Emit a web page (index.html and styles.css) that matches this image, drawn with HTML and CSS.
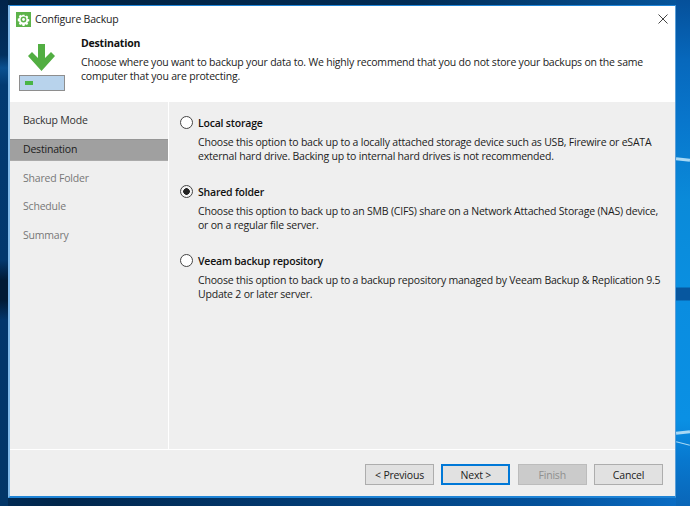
FILE: index.html
```html
<!DOCTYPE html>
<html lang="en">
<head>
<meta charset="utf-8">
<title>Configure Backup</title>
<link rel="stylesheet" href="styles.css">
</head>
<body>
<div class="wall-top"></div>
<div class="wall-left"></div>
<div class="wall-right"></div>
<div class="wall-streak s1"></div>
<div class="wall-streak s2"></div>
<div class="wall-streak s3"></div>
<main class="window">
  <header class="head">
    <div class="titlebar">
      <svg class="appicon" width="15" height="15" viewBox="0 0 15 15" aria-hidden="true">
        <rect width="15" height="15" fill="#5cb34a"/>
        <path d="M6.300 1.600h2.400l.3 1.600 1.100.5 1.400-.9 1.700 1.700-.9 1.400.5 1.100 1.600.3v2.400l-1.600.3-.5 1.100.9 1.400-1.700 1.700-1.400-.9-1.100.5-.3 1.600H6.300l-.3-1.600-1.100-.5-1.400.9-1.700-1.700.9-1.400-.5-1.100-1.600-.3V6.300l1.600-.3.5-1.100-.9-1.400 1.700-1.700 1.400.9 1.100-.5z" fill="#fff" transform="translate(1.300 1.300) scale(.83)"/>
        <circle cx="7.500" cy="7.500" r="2.900" fill="#5cb34a"/>
        <circle cx="7.500" cy="7.500" r="1.400" fill="#fff"/>
      </svg>
      <span class="wintitle">Configure Backup</span>
      <svg class="close" width="10" height="10" viewBox="0 0 10 10" aria-hidden="true"><path d="M.5.500l9 9M9.500.500l-9 9" stroke="#444" stroke-width="1" fill="none"/></svg>
    </div>
    <div class="banner">
      <svg class="bannericon" width="48" height="48" viewBox="0 0 48 48" aria-hidden="true">
        <path d="M20 0h7v14l6-6 4 4-13.500 15L10 12l4-4 6 6z" fill="#52ae42"/>
        <rect x="1.500" y="31.500" width="45" height="15" fill="#b8d3ec" stroke="#8e8e8e"/>
        <rect x="7" y="37" width="8" height="4" fill="#49b545"/>
      </svg>
      <div class="bannertext">
        <h1>Destination</h1>
        <p>Choose where you want to backup your data to. We highly recommend that you do not store your backups on the same computer that you are protecting.</p>
      </div>
    </div>
  </header>
  <div class="middle">
    <nav class="steps">
      <div class="step">Backup Mode</div>
      <div class="step current">Destination</div>
      <div class="step off">Shared Folder</div>
      <div class="step off">Schedule</div>
      <div class="step off">Summary</div>
    </nav>
    <section class="options">
      <div class="option">
        <div class="optlabel"><span class="radio"></span>Local storage</div>
        <p>Choose this option to back up to a locally attached storage device such as USB, Firewire or eSATA external hard drive. Backing up to internal hard drives is not recommended.</p>
      </div>
      <div class="option">
        <div class="optlabel"><span class="radio on"></span>Shared folder</div>
        <p>Choose this option to back up to an SMB (CIFS) share on a Network Attached Storage (NAS) device, or on a regular file server.</p>
      </div>
      <div class="option">
        <div class="optlabel"><span class="radio"></span>Veeam backup repository</div>
        <p>Choose this option to back up to a backup repository managed by Veeam Backup &amp; Replication 9.5 Update 2 or later server.</p>
      </div>
    </section>
  </div>
  <footer class="foot">
    <button class="btn" type="button">&lt; Previous</button>
    <button class="btn primary" type="button">Next &gt;</button>
    <button class="btn disabled" type="button">Finish</button>
    <button class="btn" type="button">Cancel</button>
  </footer>
</main>
</body>
</html>
```

FILE: styles.css
```css
* { box-sizing: border-box; }
html, body { height: 100%; }
body {
  margin: 0;
  position: relative;
  overflow: hidden;
  padding: 5px 14px 8px 8px;
  font-family: "Open Sans", "Noto Sans", "Liberation Sans", sans-serif;
  font-size: 10.5px;
  letter-spacing: -0.2px;
  color: #1c1c1c;
  background: linear-gradient(90deg, #012b55 0, #01264b 60px, #023a72 300px, #04529c 550px, #0a6fc8 690px);
}
.wall-top {
  position: absolute; left: 0; top: 0; right: 0; height: 5px;
  background: linear-gradient(90deg, #01213f, #012c55 60%, #05569e);
}
.wall-left {
  position: absolute; left: 0; top: 0; width: 8px; bottom: 0;
  background: linear-gradient(180deg, #01244a 0, #01305f 55px, #0a5090 68px, #023a72 85px, #02386e 260px, #011b36 280px, #011b36 300px, #02366c 320px, #023668 506px);
}
.wall-right {
  position: absolute; right: 0; top: 0; width: 14px; bottom: 0;
  background: linear-gradient(180deg, #05509a 0, #0768bc 60px, #0876cc 120px, #0a8ad9 200px, #0a8fe0 287px, #07579f 288px, #07579f 300px, #0a8de0 301px, #0a90e4 420px, #0878cf 460px, #0a66b8 506px);
}
.wall-streak {
  position: absolute; right: 0; width: 14px; height: 3px;
  background: #a8d8f4;
}
.s1 { top: 158px; transform: rotate(6deg); }
.s2 { top: 431px; transform: rotate(-6deg); }
.s3 { top: 443px; height: 1px; transform: rotate(14deg); }

.window {
  position: relative;
  width: 668px;
  height: 493px;
  display: flex;
  flex-direction: column;
  background: #efefef;
  border: 1px solid #1f84d6;
  border-left-width: 2px;
  border-bottom-width: 2px;
  border-right-color: #5a9fd8;
  border-left-color: #7fb8e8;
}
.head { height: 96px; background: #fff; flex: none; }
.titlebar {
  height: 24px;
  display: flex;
  align-items: center;
  padding: 2px 7px 0 6px;
}
.appicon { margin-right: 4px; }
.wintitle { flex: 1; color: #222; }
.banner { display: flex; padding: 0 10px 0 8px; }
.bannericon { flex: none; margin: 14px 15px 0 0; }
.bannertext { padding-top: 6px; }
.bannertext h1 { margin: 0 0 4px; font-size: 10.5px; font-weight: 700; line-height: 15px; color: #111; }
.bannertext p { margin: 0; line-height: 14px; }

.middle { flex: 1; display: flex; min-height: 0; border-bottom: 1px solid #fff; }
.steps {
  width: 159px;
  flex: none;
  padding-top: 8px;
  border-right: 1.500px solid #fff;
}
.step {
  height: 22px;
  margin-bottom: 6.750px;
  padding-left: 13px;
  line-height: 21px;
  color: #333;
}
.step.current { background: #a0a0a0; color: #1c1c1c; border-top: 1px solid #969696; border-bottom: 1px solid #aaa; line-height: 19px; }
.step.off { color: #777; }
.options { flex: 1; padding: 13px 10px 0 11px; }
.option { margin-bottom: 21px; }
.option p { margin: 0; padding-left: 18px; line-height: 14px; }
.optlabel {
  display: flex;
  align-items: center;
  height: 15px;
  margin-bottom: 5px;
  font-weight: 600;
  color: #111;
}
.radio {
  width: 13px;
  height: 13px;
  margin-right: 5px;
  border: 1px solid #444;
  border-radius: 50%;
  background: #fff;
  flex: none;
}
.radio.on { background: radial-gradient(circle, #222 0 3px, #f4f4f4 3.600px); }

.foot {
  height: 46px;
  flex: none;
  display: flex;
  justify-content: flex-end;
  align-items: flex-start;
  gap: 7.330px;
  padding: 14px 12px 0 0;
}
.btn {
  width: 69px;
  height: 21px;
  padding: 0;
  border: 1px solid #adadad;
  background: #e1e1e1;
  font: inherit;
  letter-spacing: inherit;
  color: #222;
}
.btn.primary { border: 2px solid #0078d7; }
.btn.disabled { background: #cbcbcb; border-color: #bcbcbc; color: #8f8f8f; }
```
